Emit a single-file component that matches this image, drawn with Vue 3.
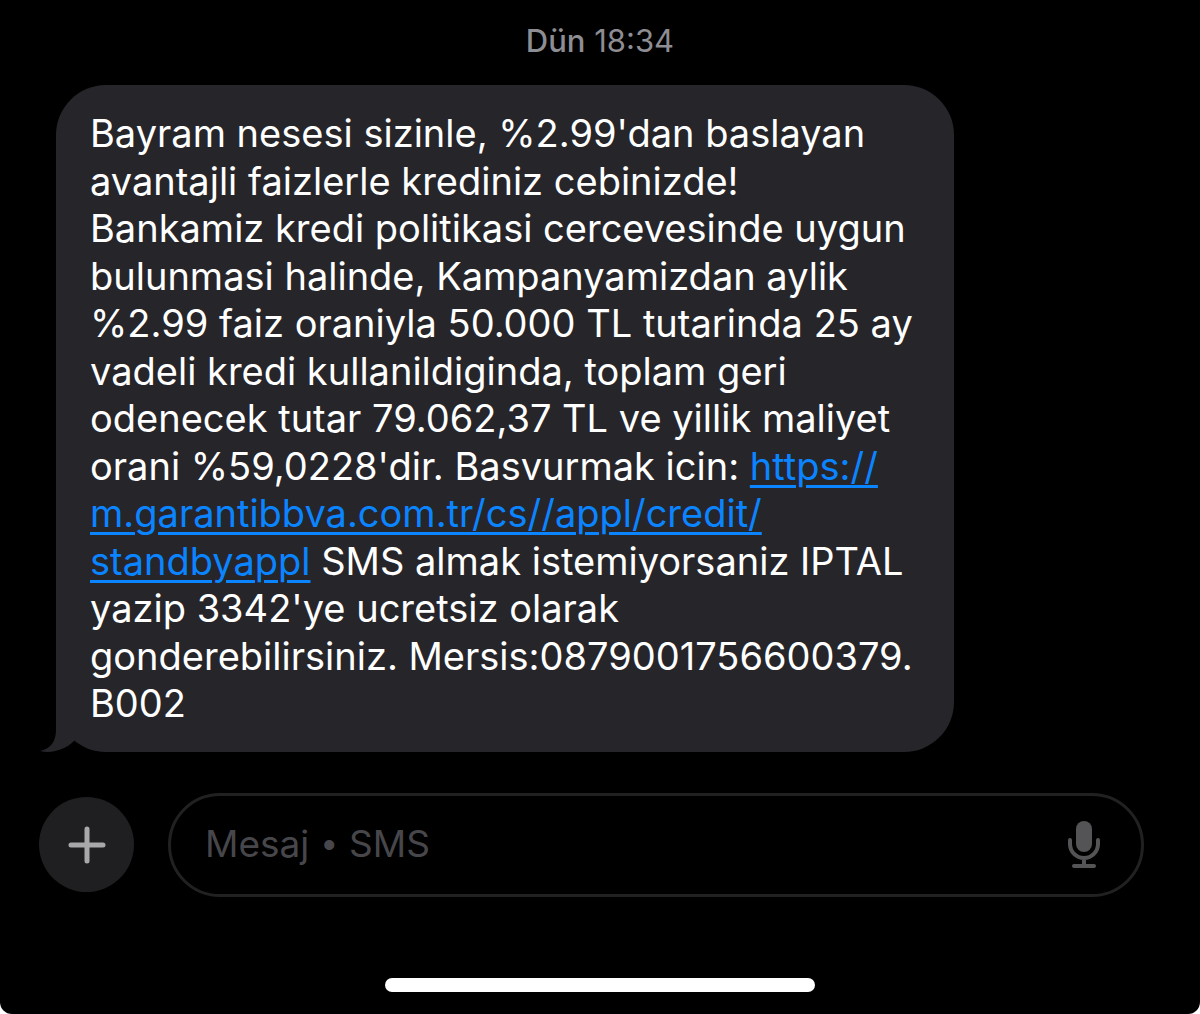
<script setup>
import { ref } from 'vue'
const draft = ref('')
</script>

<template>
  <div class="screen">
    <main class="thread">
      <p class="stamp"><b>Dün</b> 18:34</p>
      <div class="bubble">
        <svg class="tail" viewBox="0 0 60 60" aria-hidden="true"><path d="M16 0V38C16 50 10 57 0 59C13 62 26 57 34 49L44 0Z" /></svg>
        <p class="message">Bayram nesesi sizinle, %2.99'dan baslayan<br>avantajli faizlerle krediniz cebinizde!<br>Bankamiz kredi politikasi cercevesinde uygun<br>bulunmasi halinde, Kampanyamizdan aylik<br>%2.99 faiz oraniyla 50.000 TL tutarinda 25 ay<br>vadeli kredi kullanildiginda, toplam geri<br>odenecek tutar 79.062,37 TL ve yillik maliyet<br>orani %59,0228'dir. Basvurmak icin: <a href="https://m.garantibbva.com.tr/cs//appl/credit/standbyappl">https://<br>m.garantibbva.com.tr/cs//appl/credit/<br>standbyappl</a> SMS almak istemiyorsaniz IPTAL<br>yazip 3342'ye ucretsiz olarak<br>gonderebilirsiniz. Mersis:0879001756600379.<br>B002</p>
      </div>
    </main>
    <form class="composer" @submit.prevent>
      <button class="add" type="button" aria-label="Ekle">
        <svg viewBox="0 0 40 40" aria-hidden="true"><path d="M20 4V36M4 20H36" /></svg>
      </button>
      <div class="field">
        <div class="entry">
          <input id="draft" v-model="draft" type="text">
          <label for="draft" :class="{ filled: draft }">Mesaj <span class="dot">•</span> SMS</label>
        </div>
        <button class="mic" type="button" aria-label="Dikte">
          <svg viewBox="0 0 34 48" aria-hidden="true"><rect x="9" y="0" width="16" height="31" rx="8" /><path d="M3 19V23A14 14 0 0 0 31 23V19M17 37V45M7 45H27" /></svg>
        </button>
      </div>
    </form>
    <div class="home"></div>
  </div>
</template>

<style>
body { margin: 0; background: #fff; }
</style>

<style scoped>
.screen { box-sizing: border-box; min-height: 100vh; padding: 24px 0 22px; display: flex; flex-direction: column; background: #000; border-radius: 0 0 12px 12px; font-family: Inter, "Liberation Sans", sans-serif; color: #fff; }
.stamp { margin: 0 0 27px; text-align: center; font-size: 31px; line-height: 34px; color: #8d8d93; }
.stamp b { font-weight: 500; }
.bubble { position: relative; box-sizing: border-box; width: fit-content; min-width: 898px; margin-left: 56px; padding: 25px 34px 24px; border-radius: 50px; background: #26252a; }
.message { margin: 0; font-size: 38px; line-height: 1.25; white-space: nowrap; }
.message a { color: #0b84ff; text-decoration-thickness: 3px; text-underline-offset: 5px; }
.tail { position: absolute; left: -16px; bottom: 0; width: 60px; height: 60px; fill: #26252a; }
.composer { display: flex; align-items: center; gap: 34px; margin: 41px 56px 0 39px; }
button { border: 0; padding: 0; font: inherit; }
.add { flex: none; display: grid; place-items: center; width: 95px; height: 95px; border-radius: 50%; background: #1f1f21; }
.add svg { width: 40px; height: 40px; fill: none; stroke: #a8a8aa; stroke-width: 5; stroke-linecap: round; }
.field { flex: 1; box-sizing: border-box; height: 104px; display: flex; align-items: center; padding: 0 40px 0 34px; border: 3px solid #212122; border-radius: 52px; }
.entry { flex: 1; display: grid; align-items: center; font-size: 37px; line-height: 48px; }
.entry > * { grid-area: 1 / 1; min-width: 0; }
.entry input { padding: 0; border: 0; outline: 0; background: none; color: #fff; font: inherit; }
.entry label { color: #47474b; pointer-events: none; white-space: nowrap; }
.entry label.filled { visibility: hidden; }
.dot { margin: 0 3px; font-family: "Liberation Sans", sans-serif; }
.mic { background: none; width: 34px; height: 48px; }
.mic svg { display: block; width: 34px; height: 48px; fill: #545456; }
.mic path { fill: none; stroke: #545456; stroke-width: 4; stroke-linecap: round; }
.home { width: 430px; height: 14px; margin: auto auto 0; border-radius: 7px; background: #fff; }
</style>
